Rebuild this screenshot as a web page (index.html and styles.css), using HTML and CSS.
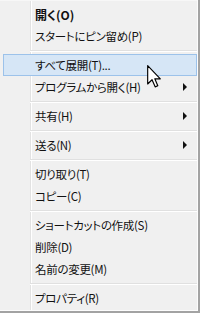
FILE: index.html
```html
<!DOCTYPE html>
<html lang="ja">
<head>
<meta charset="utf-8">
<link rel="stylesheet" href="styles.css">
</head>
<body>
<div class="menu">
  <div class="item bold">開く(O)</div>
  <div class="item">スタートにピン留め(P)</div>
  <div class="sep"></div>
  <div class="item hover">すべて展開(T)...</div>
  <div class="item">プログラムから開く(H)<span class="arrow"></span></div>
  <div class="sep"></div>
  <div class="item">共有(H)<span class="arrow"></span></div>
  <div class="sep"></div>
  <div class="item">送る(N)<span class="arrow"></span></div>
  <div class="sep"></div>
  <div class="item">切り取り(T)</div>
  <div class="item">コピー(C)</div>
  <div class="sep"></div>
  <div class="item">ショートカットの作成(S)</div>
  <div class="item">削除(D)</div>
  <div class="item">名前の変更(M)</div>
  <div class="sep"></div>
  <div class="item">プロパティ(R)</div>
  <svg class="cursor" width="14" height="23" viewBox="0 0 12 20">
    <path d="M0.5 0.5 L0.5 16.5 L4.3 12.8 L7 19 L9.3 18 L6.7 12 L11.5 12 Z" fill="#fff" stroke="#000" stroke-width="1" stroke-linejoin="round"/>
  </svg>
</div>
</body>
</html>
```

FILE: styles.css
```css
html, body {
  margin: 0;
  padding: 0;
}
body {
  width: 200px;
  height: 313px;
  font-family: "Noto Sans CJK JP", "Noto Sans", sans-serif;
  font-feature-settings: "palt";
}
.menu {
  position: relative;
  box-sizing: border-box;
  width: 200px;
  height: 313px;
  padding-top: 3px;
  border-right: 2px solid #a3a3a3;
  border-bottom: 2px solid #a3a3a3;
  box-shadow: inset -1px -1px 0 #fcfcfc, inset 0 1px 0 #f7f7f7;
  background:
    linear-gradient(to right, transparent 30px, #e2e2e2 30px, #e2e2e2 31px, #ffffff 31px, #ffffff 32px, transparent 32px),
    #f0f0f0;
  display: flex;
  flex-direction: column;
}
.item {
  box-sizing: border-box;
  height: 22px;
  margin: 0 1px 0 3px;
  padding-left: 31px;
  border: 1px solid transparent;
  display: flex;
  align-items: center;
  font-size: 11.5px;
  letter-spacing: -0.3px;
  color: #111;
  white-space: nowrap;
}
.bold {
  font-weight: bold;
  font-size: 12px;
  letter-spacing: 0;
}
.hover {
  background: #d6e6f6;
  border-color: #9cc2ea;
}
.sep {
  height: 7px;
  margin: 0 1px 0 30px;
  background: linear-gradient(to bottom, transparent 3px, #e0e0e0 3px, #e0e0e0 4px, #ffffff 4px, #ffffff 5px, transparent 5px);
}
.arrow {
  margin-left: auto;
  margin-right: 9px;
  width: 0;
  height: 0;
  border-left: 4px solid #111;
  border-top: 4px solid transparent;
  border-bottom: 4px solid transparent;
}
.cursor {
  position: absolute;
  left: 147px;
  top: 65px;
}
```
